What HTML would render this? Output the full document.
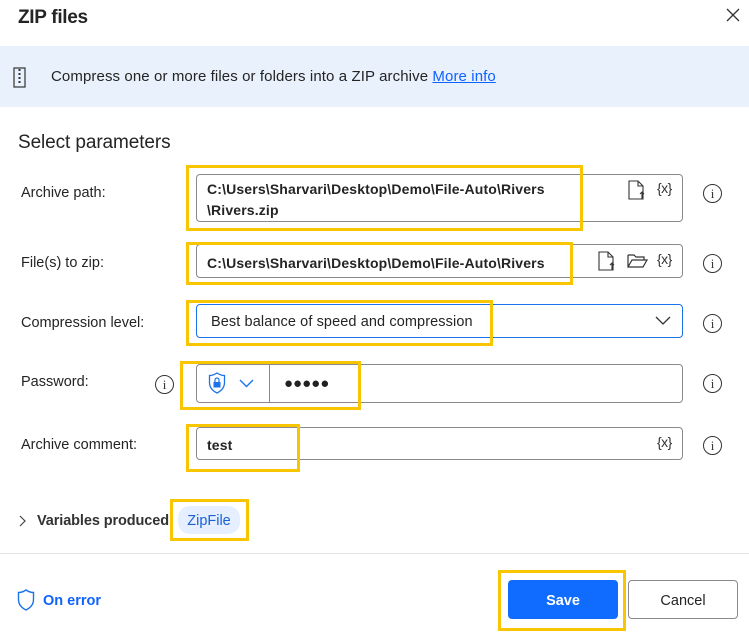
<!DOCTYPE html>
<html><head><meta charset="utf-8"><style>
*{box-sizing:border-box;margin:0;padding:0}
body{width:749px;height:638px;background:#fff;font-family:"Liberation Sans",sans-serif;color:#242424;position:relative;overflow:hidden}
.a{position:absolute}
.lbl{font-size:14.5px;letter-spacing:0;color:#242424}
.inp{position:absolute;border:1px solid #8a8a8a;border-radius:4px;background:#fff;left:196px;width:487px}
.yb{position:absolute;border:3px solid #f9c400}
.val{font-size:14px;font-weight:bold;letter-spacing:0.15px;color:#242424}
.info{position:absolute;width:19px;height:19px;border:1.3px solid #333;border-radius:50%;font-size:13px;text-align:center;line-height:17px;font-family:"Liberation Serif",serif;color:#333}
.vx{position:absolute;font-size:14px;color:#333;letter-spacing:-0.5px}
</style></head><body>
<div class="a" style="left:18px;top:7px;font-size:19px;font-weight:bold;letter-spacing:-0.3px">ZIP files</div>
<svg class="a" style="left:726px;top:8px" width="14" height="14"><path d="M1 1L13 13M13 1L1 13" stroke="#333" stroke-width="1.3"/></svg>

<div class="a" style="left:0;top:46px;width:749px;height:61px;background:#e8f1fc"></div>
<svg class="a" style="left:13px;top:67px" width="13" height="21"><rect x="1" y="1" width="11" height="19" fill="none" stroke="#333" stroke-width="1.2"/><path d="M6.5 2v14" stroke="#333" stroke-width="2" stroke-dasharray="2 2"/></svg>
<div class="a" style="left:51px;top:68px;font-size:15px;letter-spacing:0.1px">Compress one or more files or folders into a ZIP archive <span style="color:#0f62fe;text-decoration:underline">More info</span></div>

<div class="a" style="left:18px;top:132px;font-size:19px;letter-spacing:-0.1px">Select parameters</div>

<!-- Archive path -->
<div class="a lbl" style="left:21px;top:185px">Archive path:</div>
<div class="inp" style="top:174px;height:48px"></div>
<div class="a val" style="left:207px;top:179px;line-height:21px">C:\Users\Sharvari\Desktop\Demo\File-Auto\Rivers<br>\Rivers.zip</div>
<svg class="a" style="left:628px;top:180px" width="18" height="20"><path d="M1 1h9l5 5v13H1z M10 1v5h5" fill="none" stroke="#333" stroke-width="1.1"/><path d="M14 19v-7M12 14l2-2 2 2" fill="none" stroke="#333" stroke-width="1.1"/></svg>
<div class="vx" style="left:657px;top:180px">{x}</div>
<div class="info" style="left:703px;top:184px">i</div>
<div class="yb" style="left:186px;top:165px;width:397px;height:66px"></div>

<!-- Files -->
<div class="a lbl" style="left:21px;top:255px">File(s) to zip:</div>
<div class="inp" style="top:244px;height:34px"></div>
<div class="a val" style="left:207px;top:255px">C:\Users\Sharvari\Desktop\Demo\File-Auto\Rivers</div>
<svg class="a" style="left:598px;top:251px" width="18" height="20"><path d="M1 1h9l5 5v13H1z M10 1v5h5" fill="none" stroke="#333" stroke-width="1.1"/><path d="M14 19v-7M12 14l2-2 2 2" fill="none" stroke="#333" stroke-width="1.1"/></svg>
<svg class="a" style="left:627px;top:253px" width="22" height="16"><path d="M1 2h6l2 2h8v3M1 2v12h15l4-7H5L1 14" fill="none" stroke="#333" stroke-width="1.2"/></svg>
<div class="vx" style="left:657px;top:251px">{x}</div>
<div class="info" style="left:703px;top:254px">i</div>
<div class="yb" style="left:186px;top:242px;width:387px;height:43px"></div>

<!-- Compression -->
<div class="a lbl" style="left:21px;top:315px">Compression level:</div>
<div class="inp" style="top:304px;height:34px;border-color:#1a73e8"></div>
<div class="a" style="left:211px;top:314px;font-size:14.5px;letter-spacing:0.1px">Best balance of speed and compression</div>
<svg class="a" style="left:655px;top:316px" width="16" height="10"><path d="M1 1l7 7 7-7" fill="none" stroke="#333" stroke-width="1.3"/></svg>
<div class="info" style="left:703px;top:314px">i</div>
<div class="yb" style="left:186px;top:300px;width:307px;height:46px"></div>

<!-- Password -->
<div class="a lbl" style="left:21px;top:374px">Password:</div>
<div class="info" style="left:155px;top:375px">i</div>
<div class="inp" style="top:364px;height:39px"></div>
<div class="a" style="left:269px;top:365px;width:1px;height:37px;background:#8a8a8a"></div>
<svg class="a" style="left:208px;top:372px" width="18" height="22"><path d="M9 1C6 3 4 3.5 1.5 3.5v7C1.5 16 5 19 9 21c4-2 7.5-5 7.5-10.5v-7C14 3.5 12 3 9 1z" fill="none" stroke="#1a73e8" stroke-width="1.3"/><rect x="5.5" y="10" width="7" height="5.5" fill="#1a73e8"/><path d="M7 10V8a2 2 0 0 1 4 0v2" fill="none" stroke="#1a73e8" stroke-width="1.2"/></svg>
<svg class="a" style="left:239px;top:379px" width="15" height="9"><path d="M1 1l6.5 6.5L14 1" fill="none" stroke="#1a73e8" stroke-width="1.4"/></svg>
<div class="a" style="left:284px;top:375px;font-size:15px;letter-spacing:0px;color:#222">●●●●●</div>
<div class="info" style="left:703px;top:374px">i</div>
<div class="yb" style="left:180px;top:361px;width:181px;height:49px"></div>

<!-- Comment -->
<div class="a lbl" style="left:21px;top:437px">Archive comment:</div>
<div class="inp" style="top:427px;height:33px"></div>
<div class="a val" style="left:207px;top:437px">test</div>
<div class="vx" style="left:657px;top:434px">{x}</div>
<div class="info" style="left:703px;top:436px">i</div>
<div class="yb" style="left:186px;top:424px;width:114px;height:48px"></div>

<!-- Variables -->
<svg class="a" style="left:19px;top:515px" width="8" height="12"><path d="M1 1l5 5-5 5" fill="none" stroke="#444" stroke-width="1.2"/></svg>
<div class="a" style="left:37px;top:513px;font-size:14.5px;font-weight:bold;letter-spacing:-0.1px;color:#333">Variables produced</div>
<div class="a" style="left:178px;top:506px;width:62px;height:28px;background:#e5efff;border-radius:12px;color:#1a5fd6;font-size:14.5px;text-align:center;line-height:30px">ZipFile</div>
<div class="yb" style="left:170px;top:499px;width:79px;height:42px"></div>

<div class="a" style="left:0;top:553px;width:749px;height:1px;background:#e4e4e4"></div>

<svg class="a" style="left:17px;top:589px" width="18" height="22"><path d="M9 1C6 3 4 3.5 1.5 3.5v7C1.5 16 5 19 9 21c4-2 7.5-5 7.5-10.5v-7C14 3.5 12 3 9 1z" fill="none" stroke="#1a73e8" stroke-width="1.4"/></svg>
<div class="a" style="left:43px;top:593px;font-size:14.5px;color:#0f62fe;font-weight:bold">On error</div>

<div class="a" style="left:508px;top:580px;width:110px;height:39px;background:#0f6cff;border-radius:4px;color:#fff;font-weight:bold;font-size:14.5px;text-align:center;line-height:42px">Save</div>
<div class="yb" style="left:498px;top:570px;width:128px;height:61px"></div>
<div class="a" style="left:628px;top:580px;width:110px;height:39px;background:#fff;border:1px solid #8a8a8a;border-radius:4px;color:#242424;font-size:14.5px;text-align:center;line-height:40px">Cancel</div>
</body></html>
